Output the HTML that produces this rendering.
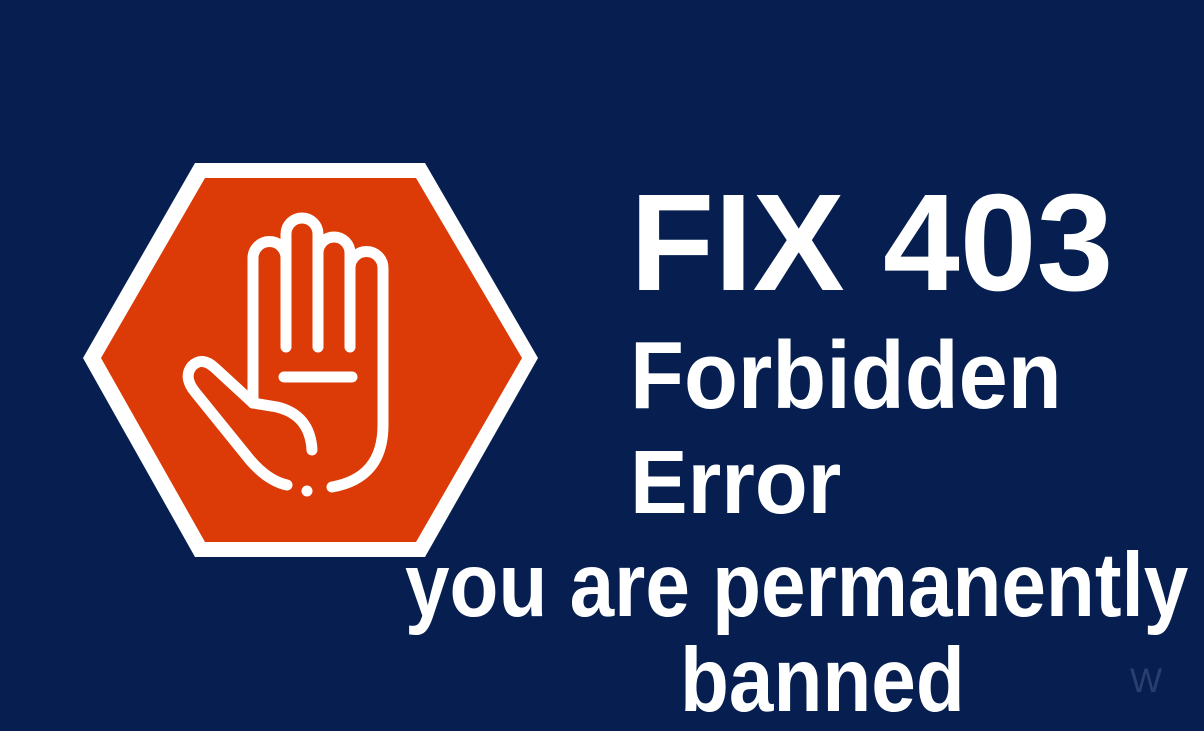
<!DOCTYPE html>
<html><head><meta charset="utf-8"><style>
html,body{margin:0;padding:0}
body{width:1204px;height:723px;background:#061f50;position:relative;overflow:hidden;font-family:"Liberation Sans",Arial,sans-serif;color:#fff;font-weight:bold}
.t{position:absolute;white-space:nowrap;line-height:1;transform-origin:0 0}
</style></head><body>
<svg width="1204" height="723" style="position:absolute;left:0;top:0">
<polygon points="195,163 425,163 538,358 425,557 195,557 83,358" fill="#fff"/>
<polygon points="205,178 416,178 522,358 416,542 205,542 101,358" fill="#dc3a06"/>
<g fill="none" stroke="#fff" stroke-width="11" stroke-linecap="round" stroke-linejoin="round">
<path d="M253,403 V258 a16.5,16.5 0 0 1 33,0 V347"/>
<path d="M286,258 V234 a16,16 0 0 1 32,0 V347"/>
<path d="M318,253 a16,16 0 0 1 32,0 V347"/>
<path d="M350,268 a16.5,16.5 0 0 1 33,0 V425 Q383,478 332,487"/>
<path d="M253,403 L215,368 Q202,356 192,366 Q183,377 195,392 L250,460 Q268,481 287,485"/>
<path d="M253,403 L277,407 Q310,415 312,450"/>
<path d="M284,377 H352"/>
</g>
<circle cx="307" cy="491" r="5.5" fill="#fff"/>
<text x="1130" y="692" font-family="Liberation Sans" font-size="34" fill="#2a3f6e" font-weight="normal">W</text>
</svg>
<div class="t" style="left:630px;top:174px;font-size:138px">FIX 403</div>
<div class="t" style="left:630px;top:328px;font-size:96px;transform:scaleX(0.92)">Forbidden</div>
<div class="t" style="left:630px;top:438px;font-size:90px;transform:scaleX(0.96)">Error</div>
<div class="t" style="left:405px;top:540px;font-size:91px;transform:scaleX(0.88)">you are permanently</div>
<div class="t" style="left:680px;top:635px;font-size:91px;transform:scaleX(0.88)">banned</div>
</body></html>
